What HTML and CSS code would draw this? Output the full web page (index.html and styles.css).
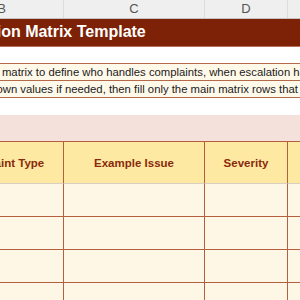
FILE: index.html
```html
<!DOCTYPE html>
<html>
<head>
<meta charset="utf-8">
<link rel="stylesheet" href="styles.css">
</head>
<body>
<div class="sheet">
  <div class="colheads">
    <div class="ch">B</div>
    <div class="ch">C</div>
    <div class="ch">D</div>
    <div class="ch">E</div>
  </div>
  <div class="title">Complaint Escalation Matrix Template</div>
  <div class="gap16"></div>
  <div class="notes">
    <div class="note n1">Use this matrix to define who handles complaints, when escalation happens, and how quickly each level must respond.</div>
    <div class="note n2">Edit dropdown values if needed, then fill only the main matrix rows that apply to your team.</div>
  </div>
  <div class="gap18"></div>
  <div class="band"></div>
  <div class="table">
    <div class="th">Complaint Type</div>
    <div class="th">Example Issue</div>
    <div class="th">Severity</div>
    <div class="th">First Contact</div>
    <div class="td"></div><div class="td"></div><div class="td"></div><div class="td"></div>
    <div class="td"></div><div class="td"></div><div class="td"></div><div class="td"></div>
    <div class="td"></div><div class="td"></div><div class="td"></div><div class="td"></div>
    <div class="td"></div><div class="td"></div><div class="td"></div><div class="td"></div>
  </div>
</div>
</body>
</html>
```

FILE: styles.css
```css
html, body {
  margin: 0;
  padding: 0;
  background: #ffffff;
  overflow: hidden;
}
body {
  width: 300px;
  height: 300px;
  font-family: "Liberation Sans", Arial, sans-serif;
}
.sheet {
  width: 460px;
  margin-left: -60px;
}
.colheads {
  display: grid;
  grid-template-columns: 124px 141px 83px 112px;
  height: 18px;
  background: #efefef;
  border-bottom: 1px solid #c4c4c4;
}
.ch {
  border-right: 1px solid #dcdcdc;
  text-align: center;
  font-size: 13px;
  line-height: 18px;
  color: #555555;
}
.title {
  height: 27px;
  line-height: 26px;
  background: #7d2206;
  border-bottom: 1px solid #b8705a;
  color: #ffffff;
  font-weight: bold;
  font-size: 16px;
  white-space: nowrap;
  overflow: hidden;
  text-indent: -82px;
}
.gap16 { height: 16px; }
.gap18 { height: 17px; }
.notes {
  border-top: 1px solid #b46a4a;
  background: #fff9ea;
}
.note {
  height: 16px;
  line-height: 16px;
  font-size: 11.3px;
  color: #1a1a1a;
  white-space: nowrap;
  overflow: hidden;
  border-bottom: 1px solid #b46a4a;
}
.n1 { text-indent: 18px; }
.n2 { text-indent: 5px; }
.band {
  height: 26px;
  background: #f4e1db;
}
.table {
  display: grid;
  grid-template-columns: 124px 141px 83px 112px;
  grid-template-rows: 42px repeat(4, 33px);
  border-top: 1px solid #b4603e;
}
.th {
  background: #fde9a2;
  border-right: 1px solid #b4603e;
  border-bottom: 1px solid #d8cfc0;
  color: #8a2a0c;
  font-weight: bold;
  font-size: 11.5px;
  display: flex;
  align-items: center;
  justify-content: center;
  white-space: nowrap;
}
.td {
  background: #fff7e6;
  border-right: 1px solid #b4603e;
  border-bottom: 1px solid #b4603e;
}
```
